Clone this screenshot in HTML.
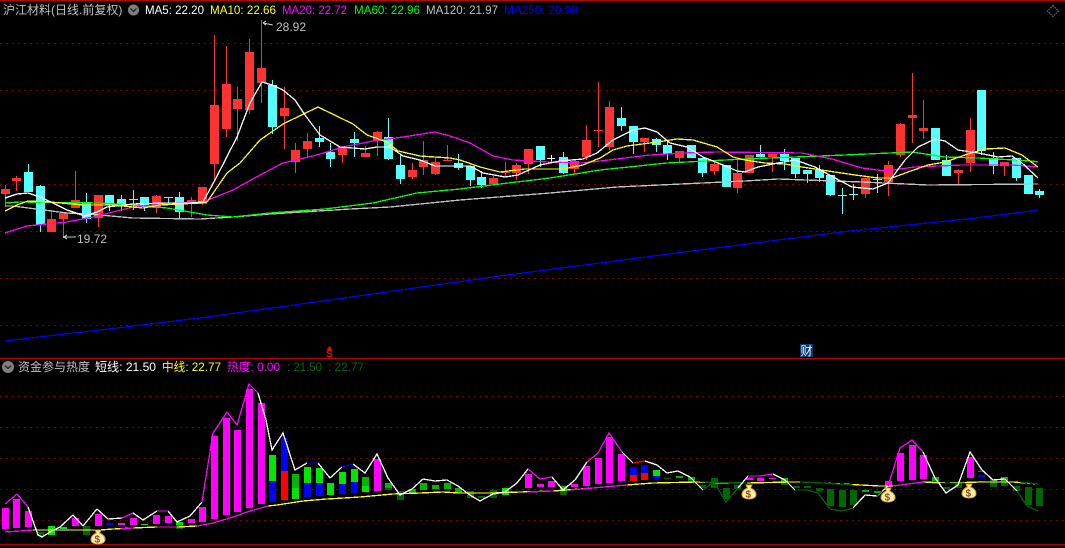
<!DOCTYPE html>
<html><head><meta charset="utf-8"><style>
html,body{margin:0;padding:0;background:#000;width:1065px;height:548px;overflow:hidden}
svg{display:block}
text{font-family:"Liberation Sans","Noto Sans CJK SC",sans-serif;font-size:12px}
.c{shape-rendering:crispEdges}
.l{fill:none;stroke-width:1.3;shape-rendering:crispEdges}
</style></head><body>
<svg width="1065" height="548" viewBox="0 0 1065 548" xmlns="http://www.w3.org/2000/svg">
<rect width="1065" height="548" fill="#000"/>
<g class="c" stroke="#800000" stroke-width="1" stroke-dasharray="2 4" fill="none">
<path d="M0 43.5H1065M0 90.5H1065M0 137.5H1065M0 184.5H1065M0 231.5H1065M0 278.5H1065M0 325.5H1065"/>
<path d="M0 396.5H1065M0 427.5H1065M0 458.5H1065M0 489.5H1065M0 520.5H1065"/>
</g>
<path class="c" fill="#c00000" d="M0 0H1065V1H0zM0 358H1065V359H0zM0 544H1065V545H0z"/>

<!-- candle wicks -->
<path class="c" fill="none" stroke="#ff3232" d="M5.5 185V207M16.5 176V191M51.5 210V232M63.5 213V238M75.5 171V208M98.5 195V227M156.5 195V213M191.5 197V217M202.5 187V205M214.5 35V180M226.5 46V137M237.5 87V141M249.5 39V114M261.5 20V103M284.5 87V149M295.5 143V173M307.5 133V158M342.5 147V163M365.5 146V157M377.5 131V156M412.5 163V179M423.5 141V175M435.5 157V175M447.5 145V161M493.5 176V185M505.5 162V177M516.5 163V180M528.5 149V174M574.5 161V175M586.5 125V160M598.5 82V147M609.5 101V150M644.5 138V152M679.5 151V162M714.5 162V175M737.5 160V193M749.5 155V172M772.5 154V172M865.5 178V198M888.5 161V196M900.5 123V157M912.5 73V143M923.5 100V139M958.5 169V185M970.5 118V172M1004.5 162V176"/>
<path class="c" fill="none" stroke="#54ffff" d="M28.5 164V192M40.5 185V232M86.5 193V223M109.5 195V211M121.5 195V211M133.5 190V210M144.5 197V211M168.5 197V204M179.5 192V218M272.5 80V134M319.5 126V147M330.5 143V167M354.5 132V157M388.5 118V160M400.5 154V184M458.5 154V170M470.5 166V186M481.5 171V188M540.5 146V167M563.5 152V174M621.5 107V131M633.5 126V154M656.5 138V152M667.5 141V160M691.5 145V158M702.5 158V177M726.5 165V187M760.5 145V157M784.5 149V170M795.5 158V178M807.5 170V183M819.5 165V182M830.5 175V196M842.5 188V214M853.5 184V200M877.5 174V193M946.5 155V176M981.5 90V155M993.5 152V174M1016.5 158V181M1028.5 175V194M1039.5 189V198"/>
<path class="c" fill="none" stroke="#fff" d="M551.5 155V162"/>
<!-- candle bodies -->
<path class="c" fill="#ff3232" d="M1 189h9v5h-9zM12 178h9v3h-9zM47 219h9v13h-9zM59 213h9v6h-9zM71 200h9v8h-9zM94 195h9v23h-9zM152 196h9v12h-9zM187 200h9v2h-9zM198 187h9v17h-9zM210 105h9v59h-9zM222 84h9v45h-9zM233 99h9v10h-9zM245 52h9v58h-9zM257 68h9v15h-9zM280 108h9v8h-9zM291 150h9v12h-9zM303 141h9v8h-9zM338 147h9v8h-9zM361 153h9v4h-9zM373 132h9v9h-9zM408 170h9v7h-9zM419 160h9v7h-9zM431 162h9v12h-9zM443 160h9v1h-9zM489 178h9v6h-9zM501 172h9v1h-9zM512 165h9v8h-9zM524 149h9v15h-9zM570 161h9v8h-9zM582 140h9v17h-9zM594 130h9v1h-9zM605 107h9v40h-9zM640 138h9v4h-9zM675 151h9v7h-9zM710 164h9v7h-9zM733 173h9v15h-9zM745 155h9v18h-9zM768 154h9v3h-9zM861 178h9v16h-9zM884 165h9v17h-9zM896 124h9v31h-9zM908 115h9v3h-9zM919 128h9v3h-9zM954 170h9v3h-9zM966 130h9v33h-9zM1000 162h9v4h-9z"/>
<path class="c" fill="#54ffff" d="M24 172h9v20h-9zM36 186h9v39h-9zM82 203h9v16h-9zM105 195h9v10h-9zM117 199h9v6h-9zM129 199h9v1h-9zM140 197h9v10h-9zM164 197h9v1h-9zM175 197h9v15h-9zM268 85h9v42h-9zM315 138h9v4h-9zM326 152h9v7h-9zM350 139h9v4h-9zM384 137h9v22h-9zM396 165h9v14h-9zM454 163h9v5h-9zM466 166h9v14h-9zM477 177h9v8h-9zM536 146h9v14h-9zM559 157h9v16h-9zM617 118h9v8h-9zM629 126h9v16h-9zM652 139h9v6h-9zM663 145h9v9h-9zM687 145h9v13h-9zM698 158h9v15h-9zM722 165h9v22h-9zM756 154h9v3h-9zM780 154h9v7h-9zM791 158h9v16h-9zM803 170h9v4h-9zM815 170h9v8h-9zM826 175h9v20h-9zM838 195h9v1h-9zM849 194h9v1h-9zM873 179h9v1h-9zM931 128h9v32h-9zM942 160h9v16h-9zM977 90h9v61h-9zM989 158h9v8h-9zM1012 158h9v20h-9zM1024 175h9v19h-9zM1035 191h9v4h-9z"/>
<path class="c" fill="#fff" d="M547 158h8v1h-8z"/>

<!-- moving averages -->
<polyline class="l" stroke="#0000ff" points="5,341 100,330 200,318 330,300 500,276 700,250 850,231 967,219 1000,215 1038,210"/>
<polyline class="l" stroke="#c0c0c0" points="5,206 13,206 67,213 100,215 133,218 200,219 233,217 270,214 350,209 390,207 460,200 550,193 617,187 745,181 778,179 862,182 928,185 1038,184"/>
<polyline class="l" stroke="#00ff00" points="5,203 20,202 100,203 133,205 167,208 207,215 233,217 270,213 325,209 373,203 417,193 460,189 500,184 550,178 600,170 667,163 745,159 845,155 912,152 945,157 978,158 1032,161 1038,162"/>
<polyline class="l" stroke="#ff00ff" points="5,233 27,226 67,222 93,217 133,207 173,203 203,202 233,190 262,174 283,163 317,155 343,147 373,141 403,137 435,132 450,136 470,143 493,156 513,160 547,162 583,163 617,159 650,155 683,153 717,152 802,153 832,159 862,168 885,171 915,167 962,165 1012,165 1038,167"/>
<polyline class="l" stroke="#ffff00" points="5,211 17,205 28,201 50,202 83,205 113,205 143,208 160,205 200,203 207,202 227,173 240,163 260,140 283,124 318,107 353,124 367,135 387,142 398,151 420,156 450,158 460,160 480,167 500,172 525,169 563,169 583,165 600,158 613,150 627,146 650,143 677,139 693,140 717,147 733,157 745,160 765,163 785,164 802,167 828,171 855,175 878,178 892,178 908,172 928,165 945,162 965,155 985,149 1005,148 1022,155 1038,167"/>
<polyline class="l" stroke="#ffffff" points="5,198 17,194 28,193 40,197 53,203 67,210 85,216 97,212 107,207 133,204 167,203 190,203 203,202 215,180 237,137 250,103 262,82 272,85 283,90 295,100 305,115 320,135 340,147 365,149 377,147 390,147 403,156 420,160 435,166 455,166 470,166 483,173 505,177 518,175 540,165 560,161 583,159 597,153 613,140 633,130 645,128 657,132 670,143 687,147 703,157 723,165 737,171 745,172 758,167 778,163 795,160 815,167 835,178 852,187 862,188 873,189 888,183 905,160 918,147 935,139 945,141 958,150 978,153 998,157 1012,156 1022,163 1038,178"/>

<!-- lower bars -->
<path class="c" fill="#ff00ff" d="M2 508h7v21h-7zM13 499h7v29h-7zM25 511h7v16h-7zM72 518h7v8h-7zM95 514h7v12h-7zM118 523h7v2h-7zM130 518h7v7h-7zM153 515h7v9h-7zM165 516h7v7h-7zM188 519h7v4h-7zM199 507h7v15h-7zM211 436h7v83h-7zM223 418h7v97h-7zM234 430h7v82h-7zM246 389h7v119h-7zM258 403h7v101h-7zM374 459h7v32h-7zM525 474h7v14h-7zM537 484h7v3h-7zM548 481h7v6h-7zM571 484h7v3h-7zM583 466h7v20h-7zM595 458h7v26h-7zM606 437h7v46h-7zM618 454h7v27h-7zM746 478h7v2h-7zM757 478h7v3h-7zM769 478h7v1h-7zM885 481h7v6h-7zM897 453h7v28h-7zM909 445h7v35h-7zM920 455h7v24h-7zM967 457h7v21h-7z"/>
<path class="c" fill="#00e600" d="M48 526h7v9h-7zM60 527h7v2h-7zM141 524h7v1h-7zM176 522h7v3h-7zM269 455h7v26h-7zM292 488h7v11h-7zM304 467h7v16h-7zM316 468h7v15h-7zM327 483h7v12h-7zM339 472h7v12h-7zM351 469h7v13h-7zM362 486h7v6h-7zM502 488h7v7h-7zM653 470h7v6h-7z"/>
<path class="c" fill="#00b400" d="M292 474h7v14h-7zM362 477h7v9h-7zM385 483h7v5h-7zM409 489h7v4h-7zM420 483h7v7h-7zM432 485h7v4h-7zM444 483h7v6h-7zM455 488h7v5h-7zM560 486h7v4h-7zM676 476h7v2h-7zM688 477h7v3h-7zM781 478h7v4h-7zM862 490h7v2h-7zM874 491h7v2h-7zM932 477h7v4h-7zM1001 477h7v4h-7z"/>
<path class="c" fill="#006400" d="M37 532h7v4h-7zM83 526h7v9h-7zM176 525h7v4h-7zM385 488h7v2h-7zM397 491h7v9h-7zM467 491h7v7h-7zM478 496h7v2h-7zM490 490h7v8h-7zM560 490h7v5h-7zM664 478h7v1h-7zM688 480h7v3h-7zM699 485h7v3h-7zM711 478h7v10h-7zM723 488h7v11h-7zM734 485h7v4h-7zM781 482h7v3h-7zM793 486h7v2h-7zM804 486h7v2h-7zM816 488h7v3h-7zM827 489h7v17h-7zM839 490h7v17h-7zM850 490h7v15h-7zM932 481h7v3h-7zM943 487h7v2h-7zM955 483h7v5h-7zM990 479h7v8h-7zM1001 481h7v5h-7zM1013 486h7v5h-7zM1025 487h7v18h-7zM1036 488h7v18h-7z"/>
<path class="c" fill="#0000ff" d="M60 525h7v1h-7zM60 530h7v1h-7zM106 523h7v2h-7zM269 481h7v21h-7zM281 438h7v33h-7zM304 483h7v14h-7zM316 483h7v13h-7zM339 484h7v10h-7zM351 482h7v11h-7zM630 467h7v8h-7zM641 465h7v8h-7zM653 476h7v3h-7zM978 475h7v2h-7z"/>
<path class="c" fill="#ff0000" d="M281 471h7v29h-7zM630 475h7v6h-7zM641 473h7v7h-7zM978 471h7v1h-7zM978 481h7v1h-7z"/>

<!-- mid line -->
<polyline class="l" stroke="#ffff00" points="5,532 20,531 33,530 100,530 113,529 133,528 157,527 177,527 197,526 213,523 233,517 250,511 268,506 277,505 303,501 327,499 360,497 393,494 420,493 443,492 460,493 493,493 520,492 553,491 593,488 627,485 653,483 697,482 720,483 747,483 790,482 800,482 823,483 880,486 893,486 923,482 947,483 980,482 1013,482 1038,484"/>
<polyline class="l" stroke="#ff00ff" points="5,532 20,531 33,530"/>
<polyline class="l" stroke="#ff00ff" points="120,529 133,528"/>
<polyline class="l" stroke="#ff00ff" points="157,527 177,527"/>
<polyline class="l" stroke="#ff00ff" points="197,526 213,523 233,517 250,511 268,506"/>
<polyline class="l" stroke="#ff00ff" points="527,492 553,491"/>
<polyline class="l" stroke="#ff00ff" points="570,490 593,488 627,485"/>
<polyline class="l" stroke="#ff00ff" points="893,486 923,482"/>
<polyline class="l" stroke="#006400" points="800,482 823,483 853,485"/>
<polyline class="l" stroke="#006400" points="940,483 965,483"/>
<polyline class="l" stroke="#006400" points="700,482 747,483"/>
<polyline class="l" stroke="#006400" points="1020,482 1038,484"/>

<!-- short line -->
<polyline class="l" stroke="#ffffff" points="5,504 17,494 28,507 38,535 42,537 50,532 60,527 73,515 83,526 97,509 108,519 122,518 133,513 143,520 157,511 168,511 177,522 190,516 202,502 213,433 227,412 237,425 249,384 258,393 266,420 272,450 283,433 295,470 307,463 318,463 330,478 342,467 353,464 365,473 377,454 388,478 400,495 412,489 423,479 435,481 447,480 458,486 470,495 480,501 493,494 505,492 517,483 528,469 540,479 552,477 563,490 575,480 587,462 598,453 609,433 622,452 633,463 645,461 657,465 667,473 678,471 690,477 703,490 714,482 726,502 738,488 748,476 760,476 773,474 785,480 795,490 807,490 818,493 830,509 842,511 853,508 865,495 877,496 888,486 900,448 912,440 923,452 935,478 946,493 958,485 970,452 982,470 993,480 1005,479 1017,491 1027,506 1038,511"/>
<polyline class="l" stroke="#ff00ff" points="5,504 17,494 28,507"/>
<polyline class="l" stroke="#ff00ff" points="122,518 133,513"/>
<polyline class="l" stroke="#ff00ff" points="157,511 168,511"/>
<polyline class="l" stroke="#ff00ff" points="202,502 213,433 227,412 237,425 249,384 258,393"/>
<polyline class="l" stroke="#0000ff" points="307,463 318,463"/>
<polyline class="l" stroke="#0000ff" points="342,467 353,464"/>
<polyline class="l" stroke="#ff00ff" points="528,469 540,479 552,477"/>
<polyline class="l" stroke="#ff00ff" points="587,462 598,453 609,433 622,452"/>
<polyline class="l" stroke="#ff0000" points="633,463 645,461"/>
<polyline class="l" stroke="#006400" points="703,490 714,482 726,502 738,488"/>
<polyline class="l" stroke="#ff00ff" points="748,476 760,476 773,474"/>
<polyline class="l" stroke="#006400" points="795,490 807,490 818,493 830,509 842,511 853,508"/>
<polyline class="l" stroke="#006400" points="877,496 882,491"/>
<polyline class="l" stroke="#ff00ff" points="888,486 900,448 912,440 923,452"/>
<polyline class="l" stroke="#006400" points="1017,491 1027,506 1038,511"/>

<!-- high/low markers -->
<g fill="none" stroke="#c0c0c0" class="c">
<path d="M263 23L273 25M263 23L266 21M263 23L266 25"/>
<path d="M64 237H76M64 237L67 235M64 237L67 239"/>
</g>
<rect class="c" x="63" y="236" width="2" height="2" fill="#c0c0c0"/>
<text x="276" y="31" fill="#c0c0c0">28.92</text>
<text x="77" y="243" fill="#c0c0c0">19.72</text>

<!-- header -->
<text x="3" y="14" fill="#c0c0c0">沪江材料(日线.前复权)</text>
<circle cx="133.5" cy="10" r="5.5" fill="#808080"/>
<path d="M130.5 8.5L133.5 11.5L136.5 8.5" fill="none" stroke="#222" stroke-width="1.3"/>
<text x="145" y="14" fill="#fff" textLength="59" lengthAdjust="spacingAndGlyphs">MA5: 22.20</text>
<text x="210" y="14" fill="#ffff00" textLength="66" lengthAdjust="spacingAndGlyphs">MA10: 22.66</text>
<text x="282" y="14" fill="#ff00ff" textLength="65" lengthAdjust="spacingAndGlyphs">MA20: 22.72</text>
<text x="354" y="14" fill="#00ff00" textLength="66" lengthAdjust="spacingAndGlyphs">MA60: 22.96</text>
<text x="426" y="14" fill="#c0c0c0" textLength="72" lengthAdjust="spacingAndGlyphs">MA120: 21.97</text>
<text x="504" y="14" fill="#0000ff" textLength="74" lengthAdjust="spacingAndGlyphs">MA250: 20.98</text>
<path d="M1053 5.5L1058.5 11L1053 16.5L1047.5 11Z" fill="none" stroke="#808080" stroke-width="1" stroke-dasharray="1.5 1"/>

<!-- S and cai markers -->
<path d="M329.5 346L332.5 350H326.5Z" fill="#ff0000"/>
<text x="326" y="357" fill="#ff0000" style="font-size:10px;font-weight:bold">S</text>
<rect class="c" x="800" y="344" width="13" height="13" fill="#0a3a70"/>
<text x="800.5" y="355" fill="#e8f4ff">财</text>

<!-- lower header -->
<circle cx="8" cy="367" r="6" fill="#808080"/>
<path d="M5 365.5L8 368.5L11 365.5" fill="none" stroke="#222" stroke-width="1.3"/>
<text x="18" y="371" fill="#c0c0c0">资金参与热度</text>
<text x="95" y="371" fill="#fff" textLength="61" lengthAdjust="spacingAndGlyphs">短线: 21.50</text>
<text x="162" y="371" fill="#ffff00" textLength="59" lengthAdjust="spacingAndGlyphs">中线: 22.77</text>
<text x="227" y="371" fill="#ff00ff" textLength="53" lengthAdjust="spacingAndGlyphs">热度: 0.00</text>
<text x="287" y="371" fill="#006a00" textLength="35" lengthAdjust="spacingAndGlyphs">: 21.50</text>
<text x="328" y="371" fill="#006a00" textLength="36" lengthAdjust="spacingAndGlyphs">: 22.77</text>

<!-- money bags -->
<g transform="translate(98,537)"><path d="M-3 -7H3L1.5 -4C5 -2.500 7 0 7 2.500C7 5.500 4 7 0 7C-4 7 -7 5.500 -7 2.500C-7 0 -5 -2.500 -1.500 -4Z" fill="#fff0a8" stroke="#e0a020"/><text x="-3.500" y="5.500" fill="#8a4a20" style="font-size:10px;font-weight:bold">$</text></g>
<g transform="translate(749,492)"><path d="M-3 -7H3L1.5 -4C5 -2.500 7 0 7 2.500C7 5.500 4 7 0 7C-4 7 -7 5.500 -7 2.500C-7 0 -5 -2.500 -1.500 -4Z" fill="#fff0a8" stroke="#e0a020"/><text x="-3.500" y="5.500" fill="#8a4a20" style="font-size:10px;font-weight:bold">$</text></g>
<g transform="translate(888,495)"><path d="M-3 -7H3L1.5 -4C5 -2.500 7 0 7 2.500C7 5.500 4 7 0 7C-4 7 -7 5.500 -7 2.500C-7 0 -5 -2.500 -1.500 -4Z" fill="#fff0a8" stroke="#e0a020"/><text x="-3.500" y="5.500" fill="#8a4a20" style="font-size:10px;font-weight:bold">$</text></g>
<g transform="translate(969,491)"><path d="M-3 -7H3L1.5 -4C5 -2.500 7 0 7 2.500C7 5.500 4 7 0 7C-4 7 -7 5.500 -7 2.500C-7 0 -5 -2.500 -1.500 -4Z" fill="#fff0a8" stroke="#e0a020"/><text x="-3.500" y="5.500" fill="#8a4a20" style="font-size:10px;font-weight:bold">$</text></g>
</svg>
</body></html>
